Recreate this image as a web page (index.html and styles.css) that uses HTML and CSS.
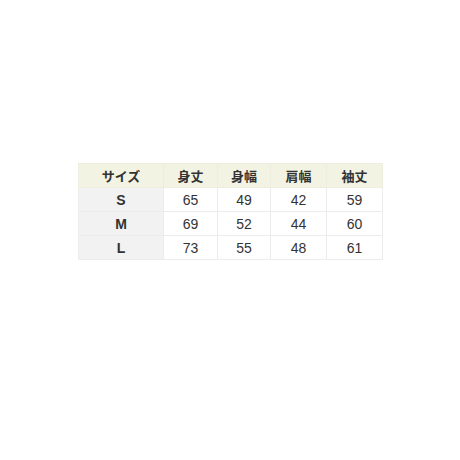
FILE: index.html
```html
<!DOCTYPE html>
<html lang="ja">
<head>
<meta charset="utf-8">
<link rel="stylesheet" href="styles.css">
</head>
<body>
<div class="page">
  <table class="size-table">
    <thead>
      <tr>
        <th class="c-size">サイズ</th>
        <th class="c1">身丈</th>
        <th class="c2">身幅</th>
        <th class="c3">肩幅</th>
        <th class="c4">袖丈</th>
      </tr>
    </thead>
    <tbody>
      <tr><th class="rowhead">S</th><td>65</td><td>49</td><td>42</td><td>59</td></tr>
      <tr><th class="rowhead">M</th><td>69</td><td>52</td><td>44</td><td>60</td></tr>
      <tr><th class="rowhead">L</th><td>73</td><td>55</td><td>48</td><td>61</td></tr>
    </tbody>
  </table>
</div>
</body>
</html>
```
FILE: styles.css
```css
html, body {
  margin: 0;
  padding: 0;
  background: #ffffff;
}
.page {
  width: 460px;
  height: 460px;
  padding-top: 163px;
  padding-left: 78px;
  box-sizing: border-box;
}
.size-table {
  border-collapse: collapse;
  table-layout: fixed;
  width: 304px;
  font-family: "Liberation Sans", "Noto Sans CJK JP", sans-serif;
  color: #333333;
}
.size-table th,
.size-table td {
  height: 24px;
  padding: 0;
  text-align: center;
  vertical-align: middle;
  border: 1px solid #ececec;
  box-sizing: border-box;
}
.size-table thead th {
  background: #f3f3e4;
  font-size: 13px;
  font-weight: bold;
  border-color: #eeeee0;
}
.c-size { width: 85px; }
.c1 { width: 54px; }
.c2 { width: 53px; }
.c3 { width: 56px; }
.c4 { width: 56px; }
.rowhead {
  background: #f2f2f2;
  font-size: 14px;
  font-weight: bold;
}
.size-table td {
  background: #ffffff;
  font-size: 14px;
}
```
